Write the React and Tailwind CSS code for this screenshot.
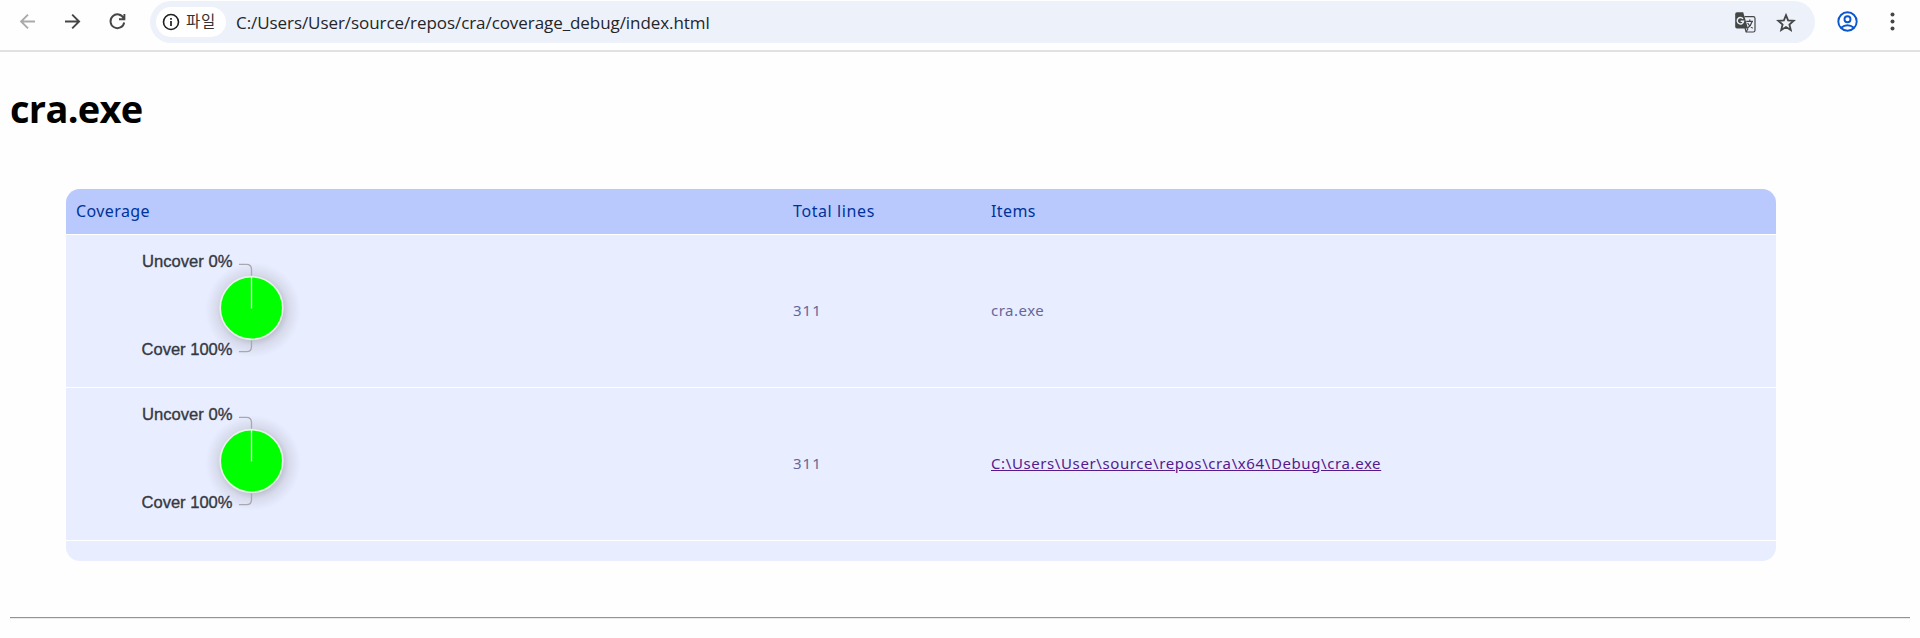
import React from "react";

function CoveragePie() {
  return (
    <svg width="300" height="152" viewBox="66 235 300 152" className="block overflow-hidden">
      <defs>
        <radialGradient id="halo">
          <stop offset="0.6" stopColor="#707078" stopOpacity="0.38" />
          <stop offset="0.75" stopColor="#80808c" stopOpacity="0.17" />
          <stop offset="1" stopColor="#9090a0" stopOpacity="0" />
        </radialGradient>
      </defs>
      <circle cx="253" cy="310" r="48" fill="url(#halo)" />
      <path d="M239 264.3H246.5Q251.5 264.3 251.5 269.5V277M251.5 339V346.5Q251.5 351.7 246.5 351.7H239" fill="none" stroke="#a8a9ae" strokeWidth="1.3" />
      <circle cx="251.5" cy="308" r="31.3" fill="#00ff00" stroke="#e9f1ea" strokeWidth="1.7" />
      <path d="M251.5 277V308.5" stroke="#e4ffe4" strokeWidth="1.3" />
      <g fill="#36383f" stroke="#36383f" strokeWidth="0.35" fontFamily="'Liberation Sans', sans-serif" fontSize="16.5">
        <text x="142" y="267" textLength="90.5" lengthAdjust="spacingAndGlyphs">Uncover 0%</text>
        <text x="141.5" y="355" textLength="91" lengthAdjust="spacingAndGlyphs">Cover 100%</text>
      </g>
    </svg>
  );
}

function Toolbar() {
  return (
    <div className="flex h-[52px] items-start border-b-2 border-[#e1e1e1] pt-px text-[#444746]">
      <div className="flex h-[42px] w-[150px] shrink-0 items-center">
        <svg width="150" height="42" viewBox="0 1 150 42" fill="none" strokeWidth="1.9">
          <path d="M35 21.5H21.5M28 14.6L21.1 21.5L28 28.4" stroke="#a9aaaa" />
          <path d="M65 21.5H78.7M72.2 14.6L79.1 21.5L72.2 28.4" stroke="currentColor" />
          <path d="M123.7 18.4A6.9 6.9 0 1 0 124.2 22.5M124.4 14V19.2H119" stroke="currentColor" />
        </svg>
      </div>
      <div className="flex h-[42px] w-[1665px] shrink-0 items-center rounded-full bg-[#ecf1fa] pl-1.5">
        <div className="flex h-[30px] w-[70px] items-center rounded-full bg-white pl-1.5 text-[#1f1f1f]">
          <svg width="18" height="18" viewBox="0 0 18 18" fill="none" stroke="currentColor">
            <circle cx="9" cy="9" r="7.5" strokeWidth="1.6" />
            <path d="M9 8.1V13M9 4.9V6.7" strokeWidth="1.7" />
          </svg>
          <span className="mb-1 ml-1.5 whitespace-nowrap font-['Noto_Sans_CJK_KR',sans-serif] text-[15.5px] leading-5 tracking-[0.7px] text-[#333333]">파일</span>
        </div>
        <span className="mt-px ml-2.5 whitespace-nowrap font-['Open_Sans',sans-serif] text-[17px] leading-6 tracking-[-0.07px] text-[#242529]">C:/Users/User/source/repos/cra/coverage_debug/index.html</span>
        <div className="mt-px mr-[19px] ml-auto flex items-center gap-5">
          <svg width="21" height="21" viewBox="0 0 21 21" fill="none">
            <path d="M9.5 4.6H18.2Q20 4.6 20 6.4V18.2Q20 20 18.2 20H11.2L10 16" stroke="#444746" strokeWidth="1.2" />
            <path d="M2 0.3H8.2L13 16.6H2Q0.2 16.6 0.2 14.8V2.1Q0.2 0.3 2 0.3Z" fill="#444746" />
            <path d="M8 6.8A3.2 3.2 0 1 0 8.6 9.2H5.6" stroke="#ecf1fa" strokeWidth="1.4" />
            <path d="M11.2 9.3H18M14.8 7.4V9.3M17.1 9.5Q16 13.8 12.4 16.2M12.6 11Q14.4 14.4 17.7 16.2" stroke="#444746" strokeWidth="1.2" />
            <path d="M13 16.6L11 20" stroke="#444746" strokeWidth="1.2" />
          </svg>
          <svg width="20" height="20" viewBox="0 0 20 20" fill="none" stroke="#444746" strokeWidth="1.8">
            <path d="M10 2.2L12.1 7.4L17.7 7.8L13.4 11.5L14.8 17L10 14L5.2 17L6.6 11.5L2.3 7.8L7.9 7.4Z" />
          </svg>
        </div>
      </div>
      <svg width="105" height="42" viewBox="1815 1 105 42" fill="none">
        <g stroke="#0b57d0" strokeWidth="1.9">
          <circle cx="1847.5" cy="21.5" r="9.2" />
          <circle cx="1847.5" cy="19.2" r="3" />
          <path d="M1841 27.8Q1847.5 22.8 1854 27.8" />
        </g>
        <g fill="#444746">
          <circle cx="1892.5" cy="14.6" r="2" />
          <circle cx="1892.5" cy="21.5" r="2" />
          <circle cx="1892.5" cy="28.4" r="2" />
        </g>
      </svg>
    </div>
  );
}

const columns = "grid grid-cols-[717px_198px_795px] items-center";

export default function App() {
  return (
    <div className="h-[638px] w-[1920px] overflow-hidden bg-[#fefefe]">
      <Toolbar />
      <main className="px-2.5 font-['Open_Sans',sans-serif]">
        <h1 className="mt-[30px] h-[52px] text-[38px] leading-[52px] font-bold tracking-[-0.7px] text-black">
          <span className="whitespace-nowrap">cra.exe</span>
        </h1>
        <div className="mt-[55px] ml-14 w-[1710px] overflow-hidden rounded-[14px] bg-[#e8edff] font-['Noto_Sans',sans-serif]">
          <div className={`${columns} h-[45px] bg-[#b9c9fe] pb-0.5 text-base text-[#003399]`}>
            <span className="pl-2.5 tracking-[0.4px]">Coverage</span>
            <span className="pl-2.5 tracking-[0.6px]">Total lines</span>
            <span className="pl-2.5 tracking-[0.4px]">Items</span>
          </div>
          <div className={`${columns} h-[153px] border-t border-white text-[15px] text-[#666699]`}>
            <CoveragePie />
            <span className="pb-0.5 pl-2.5 tracking-[1px]">311</span>
            <span className="pb-0.5 pl-2.5 tracking-[0.5px]">cra.exe</span>
          </div>
          <div className={`${columns} h-[153px] border-t border-white text-[15px] text-[#666699]`}>
            <CoveragePie />
            <span className="pb-0.5 pl-2.5 tracking-[1px]">311</span>
            <a className="mb-0.5 ml-2.5 w-fit tracking-[0.6px] text-[#551a8b] underline">C:\Users\User\source\repos\cra\x64\Debug\cra.exe</a>
          </div>
          <div className="h-[21px] border-t border-white" />
        </div>
        <div className="mt-14 h-0.5 border-t border-b border-t-[#949494] border-b-[#eaeaea]" />
      </main>
    </div>
  );
}
